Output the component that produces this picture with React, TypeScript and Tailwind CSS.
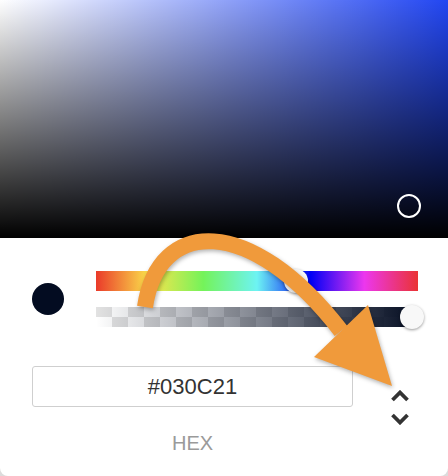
import React from "react";

function Chevron({ up }: { up: boolean }) {
  return (
    <svg width="20" height="12" viewBox="0 0 20 12" className="block">
      <polyline
        points={up ? "2.5,10 10,2.5 17.5,10" : "2.5,2 10,9.5 17.5,2"}
        fill="none"
        stroke="#333333"
        strokeWidth="3.8"
        strokeLinecap="butt"
        strokeLinejoin="miter"
      />
    </svg>
  );
}

function Thumb({ left }: { left: number }) {
  return (
    <div
      className="absolute top-[-2px] h-6 w-6 -translate-x-1/2 rounded-full bg-[#f8f8f8] shadow-[0_1px_3px_rgba(0,0,0,0.4)]"
      style={{ left }}
    />
  );
}

export default function App() {
  return (
    <div className="h-[476px] w-[448px] bg-[#dcdcdc] font-['Liberation_Sans',Arial,sans-serif]">
      <div className="relative flex h-full w-full flex-col overflow-hidden rounded-b-[8px] bg-white">
        {/* saturation / value field */}
        <div className="h-[238px] w-full shrink-0 bg-[#2246f2]">
          <div className="h-full w-full bg-[linear-gradient(to_right,#ffffff,rgba(255,255,255,0))]">
            <div className="relative h-full w-full bg-[linear-gradient(to_top,#000000,rgba(0,0,0,0))]">
              <div className="absolute left-[397px] top-[194px] h-6 w-6 rounded-full border-2 border-white" />
            </div>
          </div>
        </div>

        {/* swatch + sliders */}
        <div className="flex items-center gap-8 pl-8 pt-[33px]">
          <div className="h-8 w-8 shrink-0 rounded-full bg-[#030c21]" />
          <div className="flex w-[322px] flex-col gap-4">
            <div className="relative h-5 w-full bg-[linear-gradient(to_right,#ea3a2a_0%,#fbe44c_16.67%,#74f35a_33.33%,#6df3f3_50%,#0000f6_66.67%,#ec37ee_83.33%,#ea3334_100%)]">
              <Thumb left={200} />
            </div>
            <div className="relative h-5 w-full bg-[repeating-conic-gradient(#ffffff_0%_25%,#e2e2e2_0%_50%)] bg-[length:32px_20px]">
              <div className="h-full w-full bg-[linear-gradient(to_right,rgba(3,12,33,0),#030c21)]" />
              <Thumb left={316} />
            </div>
          </div>
        </div>

        {/* hex field + label, with format toggle */}
        <div className="mt-[39px] flex items-start pl-8">
          <div className="flex w-[321px] shrink-0 flex-col">
            <div className="flex h-[41px] items-center justify-center rounded-[3px] border border-[#cfcfcf] text-[22px] leading-none text-[#333333]">
              #030C21
            </div>
            <div className="mt-[24px] text-center text-[20px] leading-[24px] text-[#9a9a9a]">
              HEX
            </div>
          </div>
          <div className="ml-[37px] mt-[24px] flex flex-col items-center gap-[11px]">
            <Chevron up />
            <Chevron up={false} />
          </div>
        </div>

        {/* callout arrow */}
        <svg
          className="pointer-events-none absolute left-0 top-0 drop-shadow-[1px_2px_2px_rgba(0,0,0,0.3)]"
          width="448"
          height="476"
          viewBox="0 0 448 476"
        >
          <path
            d="M145,307 C158,218 250,213 341,331"
            fill="none"
            stroke="#f09a3b"
            strokeWidth="16"
            strokeLinecap="butt"
          />
          <polygon points="314,357 368,305 392,386" fill="#f09a3b" />
        </svg>
      </div>
    </div>
  );
}
